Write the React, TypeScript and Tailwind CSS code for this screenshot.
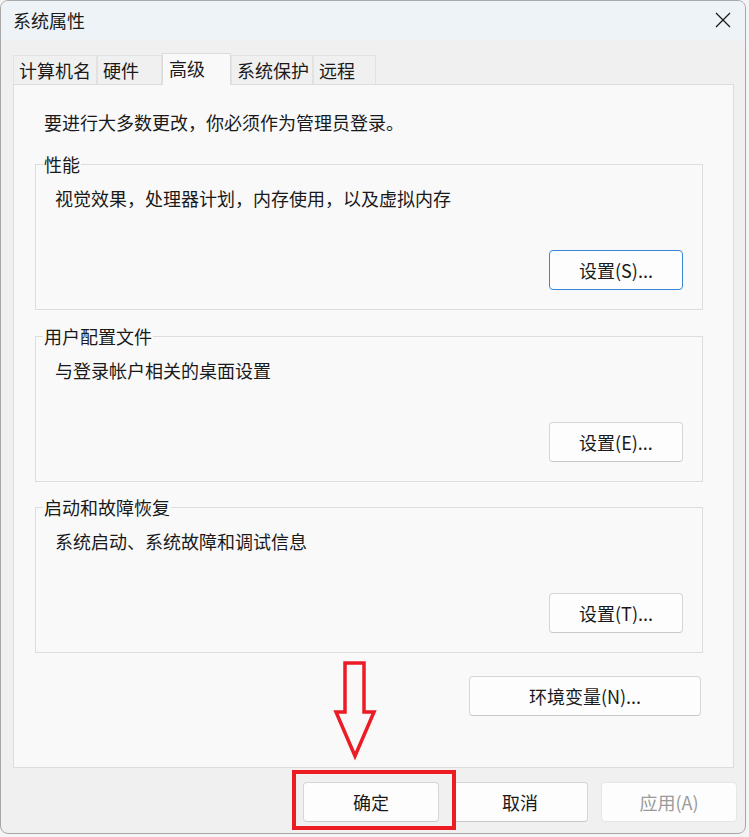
import React from "react";

const font = { fontFamily: '"Noto Sans CJK SC", "Noto Sans", sans-serif' };

function Btn({ children, className = "" }: { children: React.ReactNode; className?: string }) {
  return (
    <div
      className={
        "h-[40px] flex items-center justify-center rounded-[4px] border bg-[#fdfdfd] text-[18px] text-[#1a1a1a] " +
        className
      }
    >
      {children}
    </div>
  );
}

function Group({
  title,
  desc,
  btn,
  focus,
  className = "",
}: {
  title: string;
  desc: string;
  btn: string;
  focus?: boolean;
  className?: string;
}) {
  return (
    <fieldset className={"ml-[21px] w-[668px] h-[158px] border border-[#dddddd] " + className}>
      <legend className="ml-[7px] px-[1px] leading-[24px] text-[18px] text-[#1a1a1a]">{title}</legend>
      <div className="pl-[19px] pt-[10px] pb-[2px] leading-[24px] text-[18px] text-[#1a1a1a]">{desc}</div>
      <div className="flex justify-end pr-[19px] mt-[38px]">
        <Btn
          className={
            "w-[134px] " +
            (focus ? "border-[#3a86d6] border-[1.5px]" : "border-[#d6d6d6] border-b-[#c8c8c8]")
          }
        >
          {btn}
        </Btn>
      </div>
    </fieldset>
  );
}

export default function App() {
  const tabs = [
    { t: "计算机名", w: "w-[84px]" },
    { t: "硬件", w: "w-[65px]" },
    { t: "高级", w: "w-[69px]", sel: true },
    { t: "系统保护", w: "w-[82px]" },
    { t: "远程", w: "w-[63px]" },
  ];
  return (
    <div className="w-[749px] h-[837px] bg-[#f4f4f4] overflow-hidden" style={font}>
      <div className="relative w-[746px] h-[834px] rounded-[8px] border border-[#a8a8a8] bg-[#f0f0f0] flex flex-col overflow-hidden">
        {/* title bar */}
        <div className="h-[40px] bg-[#eef3f8] flex items-center justify-between pl-[12px] pr-[13px]">
          <span className="text-[18px] leading-[24px] text-[#1a1a1a] mt-[-2px]">系统属性</span>
          <svg width="18" height="18" viewBox="0 0 18 18" className="mt-[-2px]">
            <path d="M2 2 L16 16 M16 2 L2 16" stroke="#1a1a1a" strokeWidth="1.3" fill="none" />
          </svg>
        </div>

        {/* tabs */}
        <div className="ml-[12px] mt-[12px] h-[31px] flex items-end">
          {tabs.map((tab) =>
            tab.sel ? (
              <div
                key={tab.t}
                className={
                  tab.w +
                  " relative z-10 h-[32px] mb-[-1px] bg-[#f9f9f9] border border-[#dcdcdc] border-b-0 pl-[6px] pt-[2px] text-[18px] leading-[24px] text-[#1a1a1a]"
                }
              >
                {tab.t}
              </div>
            ) : (
              <div
                key={tab.t}
                className={
                  tab.w +
                  " h-[29px] bg-[#f0f0f0] border border-[#e2e2e2] border-b-0 pl-[5px] pt-[2px] text-[18px] leading-[24px] text-[#1a1a1a]"
                }
              >
                {tab.t}
              </div>
            )
          )}
        </div>

        {/* pane */}
        <div className="ml-[12px] w-[721px] h-[684px] bg-[#f9f9f9] border border-[#dcdcdc] flex flex-col">
          <div className="pl-[30px] pt-[25px] pb-[2px] leading-[24px] text-[18px] text-[#1a1a1a]">
            要进行大多数更改，你必须作为管理员登录。
          </div>
          <Group
            className="mt-[16px]"
            title="性能"
            desc="视觉效果，处理器计划，内存使用，以及虚拟内存"
            btn="设置(S)..."
            focus
          />
          <Group className="mt-[14px]" title="用户配置文件" desc="与登录帐户相关的桌面设置" btn="设置(E)..." />
          <Group className="mt-[13px]" title="启动和故障恢复" desc="系统启动、系统故障和调试信息" btn="设置(T)..." />
          <div className="flex justify-end pr-[32px] mt-[23px]">
            <Btn className="w-[232px] border-[#d6d6d6] border-b-[#c8c8c8]">环境变量(N)...</Btn>
          </div>
        </div>

        {/* bottom buttons */}
        <div className="mt-[14px] flex justify-end gap-[13px] pr-[8px]">
          <Btn className="w-[136px] border-[#d6d6d6] border-b-[#c8c8c8]">确定</Btn>
          <Btn className="w-[136px] border-[#d6d6d6] border-b-[#c8c8c8]">取消</Btn>
          <Btn className="w-[136px] border-[#e6e6e6] bg-[#f6f6f6] !text-[#9a9a9a]">应用(A)</Btn>
        </div>

        {/* annotations */}
        <div className="absolute left-[291px] top-[769px] w-[164px] h-[60px] border-[4px] border-[#ec1c24]" />
        <svg className="absolute left-[327px] top-[655px]" width="54" height="110" viewBox="327 655 54 110">
          <polygon
            points="344,662 363,662 363,711 373,711 354,755 335,711 344,711"
            fill="none"
            stroke="#ec1c24"
            strokeWidth="3.5"
            strokeLinejoin="miter"
          />
        </svg>
      </div>
    </div>
  );
}
